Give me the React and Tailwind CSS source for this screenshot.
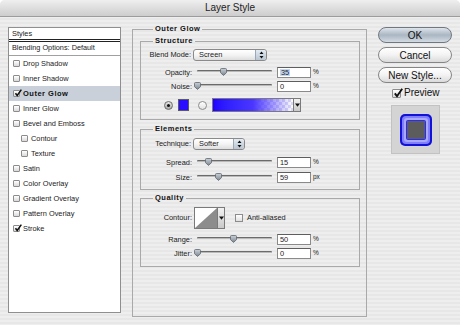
import React from "react";

// ── small Aqua widgets ────────────────────────────────────────────────────
const Check = ({ checked, size = 7 }) => (
  <span
    className={`relative block shrink-0 border border-[#8c8c8c] bg-gradient-to-b from-white to-[#d9d9d9] rounded-[1px] ${
      size === 7 ? "w-[7px] h-[7px]" : "w-[9px] h-[9px]"
    }`}
  >
    {checked && (
      <svg
        className="absolute -top-[2px] left-0"
        width={size + 1}
        height={size + 1}
        viewBox="0 0 10 10"
      >
        <path d="M1.8 5.4l2.2 2.8L9.2 0.8" fill="none" stroke="#111" strokeWidth="1.9" />
      </svg>
    )}
  </span>
);

const Thumb = ({ pos }) => (
  <svg
    className="absolute top-[1px] -ml-[3.5px]"
    style={{ left: `${pos}%` }}
    width="7"
    height="8"
    viewBox="0 0 7 8"
  >
    <defs>
      <linearGradient id="thg" x1="0" y1="0" x2="0" y2="1">
        <stop offset="0" stopColor="#c9d0d7" />
        <stop offset="1" stopColor="#7d8791" />
      </linearGradient>
    </defs>
    <path
      d="M1.5 0.5h4a1 1 0 0 1 1 1v3.2L3.5 7.4 0.5 4.7V1.5a1 1 0 0 1 1-1z"
      fill="url(#thg)"
      stroke="#5f6770"
      strokeWidth="0.8"
    />
  </svg>
);

const Field = ({ children, selected }) => (
  <div className="ml-[5px] w-[34px] h-[11px] bg-white border border-[#8a8a8a] border-t-[#5e5e5e] flex items-center pl-[2px] text-[7.4px] leading-none">
    <span className={selected ? "bg-[#c3d6f0] px-[1px]" : ""}>{children}</span>
  </div>
);

const Slider = ({ label, value, pos, unit = "%", selected }) => (
  <div className="flex items-center h-[11px]">
    <span className="w-[51px] text-right text-[7.4px] leading-none">{label}</span>
    <div className="relative ml-[5px] w-[75px] h-[11px] flex items-center">
      <div className="w-full h-[2px] -mt-[3px] rounded-full bg-[#6b6b6b] border-b border-[#b9b9b9]" />
      <Thumb pos={pos} />
    </div>
    <Field selected={selected}>{value}</Field>
    <span className="ml-[2px] text-[6.5px] leading-none">{unit}</span>
  </div>
);

const Updown = () => (
  <div className="w-[11px] h-full rounded-r-[3px] border-l border-[#9aa7b4] bg-gradient-to-b from-[#e4ebf2] to-[#b8c5d2] flex items-center justify-center">
    <svg width="5" height="8" viewBox="0 0 5 8">
      <path d="M2.5 0.5L4.5 3H0.5z M2.5 7.5L4.5 5H0.5z" fill="#111" />
    </svg>
  </div>
);

const Popup = ({ label, text, width }) => (
  <div className="flex items-center h-[12px]">
    <span className="w-[50px] text-right text-[7.4px] leading-none">{label}</span>
    <div
      className={`ml-[2px] h-[12px] flex items-center justify-between rounded-[3px] border border-[#8a8a8a] bg-gradient-to-b from-white via-[#f4f4f4] to-[#dedede] ${width}`}
    >
      <span className="pl-[5px] text-[7.4px] leading-none">{text}</span>
      <Updown />
    </div>
  </div>
);

const Arrow = ({ cls }) => (
  <div
    className={`w-[7px] border border-l-0 border-[#7a7a7a] bg-gradient-to-b from-[#f2f2f2] to-[#c9c9c9] flex items-center justify-center ${cls}`}
  >
    <svg width="5" height="4" viewBox="0 0 5 4">
      <path d="M0 0.5h5L2.5 3.8z" fill="#111" />
    </svg>
  </div>
);

const Group = ({ title, outer, className = "", children }) => (
  <fieldset className={`border border-[#a9a9a9] ${className}`}>
    <legend
      className={`px-[2px] text-[7.5px] leading-[10px] font-bold tracking-[0.5px] text-[#111] ${
        outer ? "ml-[13px]" : "ml-[12px]"
      }`}
    >
      {title}
    </legend>
    {children}
  </fieldset>
);

const Radio = ({ on }) =>
  on ? (
    <span className="shrink-0 w-[9px] h-[9px] rounded-full border border-[#6c6c6c] bg-gradient-to-b from-[#e8e8e8] to-[#a8a8a8] flex items-center justify-center">
      <span className="w-[3px] h-[3px] rounded-full bg-[#111]" />
    </span>
  ) : (
    <span className="block shrink-0 w-[9px] h-[9px] rounded-full border border-[#8c8c8c] bg-gradient-to-b from-white to-[#e2e2e2]" />
  );

// ── data ──────────────────────────────────────────────────────────────────
const effects = [
  { name: "Drop Shadow" },
  { name: "Inner Shadow" },
  { name: "Outer Glow", on: true, active: true },
  { name: "Inner Glow" },
  { name: "Bevel and Emboss" },
  { name: "Contour", sub: true },
  { name: "Texture", sub: true },
  { name: "Satin" },
  { name: "Color Overlay" },
  { name: "Gradient Overlay" },
  { name: "Pattern Overlay" },
  { name: "Stroke", on: true },
];

export default function App() {
  return (
    <div className="w-[460px] h-[325px] overflow-hidden rounded-t-[5px] font-['Liberation_Sans',Arial,sans-serif] text-[#1a1a1a] bg-[repeating-linear-gradient(to_bottom,#eeeeee_0px,#eeeeee_2px,#e7e7e7_2px,#e7e7e7_4px)]">
      {/* title bar */}
      <div className="h-[17px] border-b border-[#9c9c9c] bg-gradient-to-b from-[#efefef] to-[#cdcdcd] text-center text-[10px] leading-[16px] text-[#222]">
        Layer Style
      </div>

      <div className="flex items-start">
        {/* styles list */}
        <div className="ml-[8px] mt-[10px] w-[113px] h-[286px] bg-white border border-[#8f8f8f]">
          <div className="h-[14px] pl-[3px] flex items-center text-[7.4px] border-b-[3px] border-double border-[#222]">
            Styles
          </div>
          <div className="h-[14px] pl-[3px] flex items-center text-[7.3px] border-b border-[#a0a0a0]">
            Blending Options: Default
          </div>
          {effects.map((e) => (
            <div
              key={e.name}
              className={`h-[15px] flex items-center ${e.sub ? "pl-[12px]" : "pl-[4px]"} ${
                e.active ? "bg-[#c9d0da]" : ""
              }`}
            >
              <Check checked={e.on} />
              <span
                className={`ml-[3px] leading-none ${
                  e.active ? "text-[7.5px] font-bold tracking-[0.5px] text-[#111]" : "text-[7.4px]"
                }`}
              >
                {e.name}
              </span>
            </div>
          ))}
        </div>

        {/* settings */}
        <Group title="Outer Glow" outer className="ml-[11px] mt-[7px] w-[235px] h-[293px] pl-[7px] pr-[6px] pt-[2px]">
          <Group title="Structure" className="w-[220px] pb-[7px]">
            <div className="mt-[3px]">
              <Popup label="Blend Mode:" text="Screen" width="w-[74px]" />
            </div>
            <div className="mt-[6px]">
              <Slider label="Opacity:" value="35" pos={35} selected />
            </div>
            <div className="mt-[3px]">
              <Slider label="Noise:" value="0" pos={0} />
            </div>
            <div className="mt-[6px] h-[14px] flex items-center pl-[23px]">
              <Radio on />
              <span className="block shrink-0 ml-[5px] w-[11px] h-[12px] bg-[#2a0eff] border border-[#5a5a5a]" />
              <span className="ml-[9px]">
                <Radio />
              </span>
              <div className="ml-[5px] flex h-[14px]">
                <div className="w-[82px] h-full border border-[#7a7a7a] bg-[repeating-conic-gradient(#dcdcf5_0%_25%,#ffffff_0%_50%)] bg-[length:6px_6px]">
                  <div className="w-full h-full bg-gradient-to-r from-[#2200ff] via-[#4a36ff] to-[#ffffff00]" />
                </div>
                <Arrow cls="h-full" />
              </div>
            </div>
          </Group>

          <Group title="Elements" className="mt-[4px] w-[220px] pb-[6px]">
            <div className="mt-[4px]">
              <Popup label="Technique:" text="Softer" width="w-[52px]" />
            </div>
            <div className="mt-[7px]">
              <Slider label="Spread:" value="15" pos={15} />
            </div>
            <div className="mt-[4px]">
              <Slider label="Size:" value="59" pos={28} unit="px" />
            </div>
          </Group>

          <Group title="Quality" className="mt-[3px] w-[220px] pb-[7px]">
            <div className="mt-[4px] h-[22px] flex items-center">
              <span className="w-[51px] text-right text-[7.4px] leading-none">Contour:</span>
              <div className="ml-[2px] flex h-[22px]">
                <div className="w-[24px] h-full border border-[#7a7a7a] bg-white">
                  <svg width="22" height="20" viewBox="0 0 22 20" className="block">
                    <path d="M0 20L22 0V20z" fill="#8c8c8c" />
                  </svg>
                </div>
                <Arrow cls="h-full" />
              </div>
              <span className="ml-[10px] w-[8px] h-[8px] border border-[#8c8c8c] bg-gradient-to-b from-white to-[#e0e0e0]" />
              <span className="ml-[4px] text-[7.4px] leading-none">Anti-aliased</span>
            </div>
            <div className="mt-[5px]">
              <Slider label="Range:" value="50" pos={48} />
            </div>
            <div className="mt-[3px]">
              <Slider label="Jitter:" value="0" pos={0} />
            </div>
          </Group>
        </Group>

        {/* buttons */}
        <div className="ml-[11px] mt-[10px] w-[74px] flex flex-col">
          <div className="h-[16px] rounded-full border border-[#6f7780] bg-gradient-to-b from-[#dfe5eb] via-[#aab6c3] to-[#d3dbe3] flex items-center justify-center text-[10px] text-[#111]">
            OK
          </div>
          <div className="mt-[4px] h-[16px] rounded-full border border-[#858585] bg-gradient-to-b from-white via-[#f3f3f3] to-[#dadada] flex items-center justify-center text-[10px] text-[#111]">
            Cancel
          </div>
          <div className="mt-[4px] h-[16px] rounded-full border border-[#858585] bg-gradient-to-b from-white via-[#f3f3f3] to-[#dadada] flex items-center justify-center text-[10px] text-[#111]">
            New Style...
          </div>
          <div className="mt-[4px] h-[12px] pl-[14px] flex items-center">
            <Check checked size={9} />
            <span className="ml-[3px] text-[10px] leading-none text-[#111]">Preview</span>
          </div>
          <div className="mt-[6px] ml-[13px] w-[49px] h-[49px] bg-[#d4d4d4] border border-[#c2c2c2] flex items-center justify-center">
            <div className="w-[32px] h-[32px] rounded-[5px] bg-[#1212d8] p-[2px]">
              <div className="w-full h-full rounded-[4px] bg-[#7f7fff] p-[2px]">
                <div className="w-full h-full rounded-[3px] bg-[#a9a9ff] p-[2px]">
                  <div className="w-full h-full rounded-[2px] bg-[#2a2aff] p-[1px]">
                    <div className="w-full h-full bg-[#5c5c5c]" />
                  </div>
                </div>
              </div>
            </div>
          </div>
        </div>
      </div>
    </div>
  );
}
